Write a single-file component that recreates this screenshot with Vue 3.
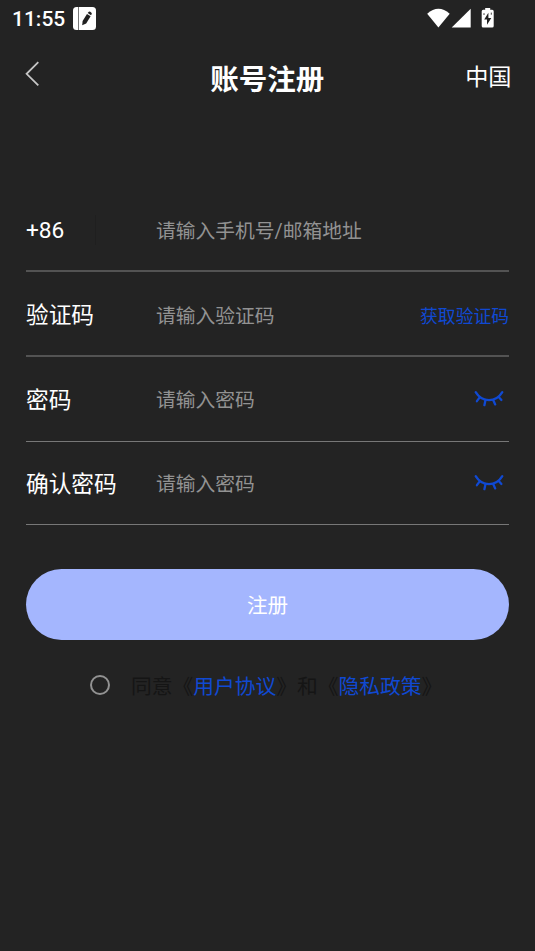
<script setup>
const fields = [
  { key: 'account', label: '+86', hint: '请输入手机号/邮箱地址', kind: 'account' },
  { key: 'code', label: '验证码', hint: '请输入验证码', kind: 'code' },
  { key: 'password', label: '密码', hint: '请输入密码', kind: 'password' },
  { key: 'confirm', label: '确认密码', hint: '请输入密码', kind: 'password' },
]
</script>

<template>
  <div class="screen">
    <header class="status">
      <span class="time">11:55</span>
      <svg class="note" width="23" height="23" viewBox="0 0 23 23">
        <rect width="23" height="23" rx="3.5" fill="#fff" />
        <path d="M5.5 0V23" stroke="#777" stroke-width="1" />
        <path d="M9.2 18.2L9.6 14L14 7.1L17.6 9.3L13.2 16.4Z" fill="#202020" />
        <path d="M14.7 6.1L15.3 5.2Q16.2 4.2 17.3 4.8L18.2 5.4Q19.2 6.2 18.6 7.2L18 8.2Z" fill="#202020" />
      </svg>
      <svg class="signals" width="70" height="22" viewBox="0 0 70 22">
        <path d="M.2 5.7Q11.4-4.4 22.7 5.7L11.4 19.5Z" fill="#fff" />
        <path d="M43.7 .8V19.5H24.7Z" fill="#fff" />
        <path d="M58.2 0H63.2V1.8H65.2Q66.7 1.8 66.7 3.3V18Q66.7 19.5 65.2 19.5H56.2Q54.7 19.5 54.7 18V3.3Q54.7 1.8 56.2 1.8H58.2Z" fill="#fff" />
        <path d="M61.4 4.8L57.2 11.6H60V16.8L64.3 10H61.4Z" fill="#222" />
        <path d="M57 5.2V7M64.3 4.6V6.7" stroke="#444" stroke-width="1" />
      </svg>
    </header>

    <nav class="nav">
      <svg class="back" width="16" height="26" viewBox="0 0 16 26">
        <path d="M13.3 1.2L1.6 12.8L13.3 24.4" fill="none" stroke="#c6c6c6" stroke-width="1.8" />
      </svg>
      <h1 class="title">账号注册</h1>
      <span class="region">中国</span>
    </nav>

    <main class="form">
      <div v-for="f in fields" :key="f.key" class="row" :class="[f.kind, f.key]">
        <span class="label">{{ f.label }}</span>
        <span class="hint">{{ f.hint }}</span>
        <span v-if="f.kind === 'code'" class="send">获取验证码</span>
        <svg v-if="f.kind === 'password'" class="eye" width="30" height="18" viewBox="0 0 30 18">
          <g fill="none" stroke="#1049d2" stroke-width="2.3" stroke-linecap="round">
            <path d="M1.7 2.2Q6.5 10.2 15 10.2Q23.5 10.2 28.3 2.2" />
            <path d="M5.7 7.3L2.9 11.2M11.5 10L10.4 15.2M19.2 10L21.2 14.4M24.7 7L27.4 10" />
          </g>
        </svg>
      </div>

      <button class="submit">注册</button>

      <div class="agree">
        <span class="radio"></span>
        <span>同意《<a>用户协议</a>》和《<a>隐私政策</a>》</span>
      </div>
    </main>
  </div>
</template>

<style>
body {
  margin: 0;
  background: #232323;
}
</style>

<style scoped>
.screen {
  height: 951px;
  box-sizing: border-box;
  overflow: hidden;
  background: #232323;
  color: #fff;
  font-family: Roboto, "Noto Sans CJK SC", sans-serif;
}
.status {
  display: flex;
  align-items: center;
  height: 37px;
  padding: 0 38px 0 12px;
}
.time {
  width: 54px;
  font-size: 21px;
  font-weight: 500;
  white-space: nowrap;
}
.note {
  margin-left: 7px;
}
.signals {
  margin-left: auto;
}
.nav {
  display: grid;
  grid-template-columns: 99px 1fr 101px;
  align-items: center;
  height: 80px;
  padding: 0 23.5px 0 25px;
}
.back {
  margin-top: -7px;
}
.title {
  margin: 7px 0 0;
  text-align: center;
  font-size: 28.5px;
  line-height: 40px;
  font-weight: 700;
}
.region {
  text-align: right;
  font-size: 23.2px;
  line-height: 34px;
}
.form {
  padding: 72px 26px 0;
}
.row {
  display: flex;
  align-items: center;
  height: 85px;
  box-sizing: border-box;
  border-bottom: 1px solid #777;
}
.row.account {
  height: 83px;
  border-bottom: 2px solid #535353;
}
.row.code {
  border-bottom: 2px solid #535353;
}
.row.confirm {
  height: 83px;
}
.label {
  width: 130px;
  padding-top: 4px;
  font-size: 22.7px;
  line-height: 34px;
  white-space: nowrap;
}
.account .label {
  width: 69px;
  margin-right: 60px;
  padding-top: 2px;
  border-right: 1px solid #1f1f1f;
  line-height: 28px;
}
.hint {
  padding-top: 4px;
  font-size: 19.75px;
  line-height: 28px;
  color: #929292;
  white-space: nowrap;
}
.code .hint {
  padding-top: 6px;
}
.send {
  margin-left: auto;
  padding-top: 2px;
  font-size: 17.8px;
  color: #1049d2;
}
.eye {
  margin-left: auto;
  margin-right: 5px;
}
.submit {
  display: block;
  width: 100%;
  height: 71px;
  margin: 44px 0 0;
  padding: 4px 0 0;
  border: 0;
  border-radius: 36px;
  background: #a4b6fe;
  color: #fff;
  font: 400 20.6px/67px Roboto, "Noto Sans CJK SC", sans-serif;
}
.agree {
  display: flex;
  align-items: center;
  height: 32px;
  margin-top: 29px;
  padding-left: 64px;
  font-size: 20.75px;
  color: #151515;
  white-space: nowrap;
}
.radio {
  box-sizing: border-box;
  width: 20px;
  height: 20px;
  margin-right: 21px;
  border: 2px solid #929292;
  border-radius: 50%;
}
.agree a {
  color: #1049d2;
}
</style>
